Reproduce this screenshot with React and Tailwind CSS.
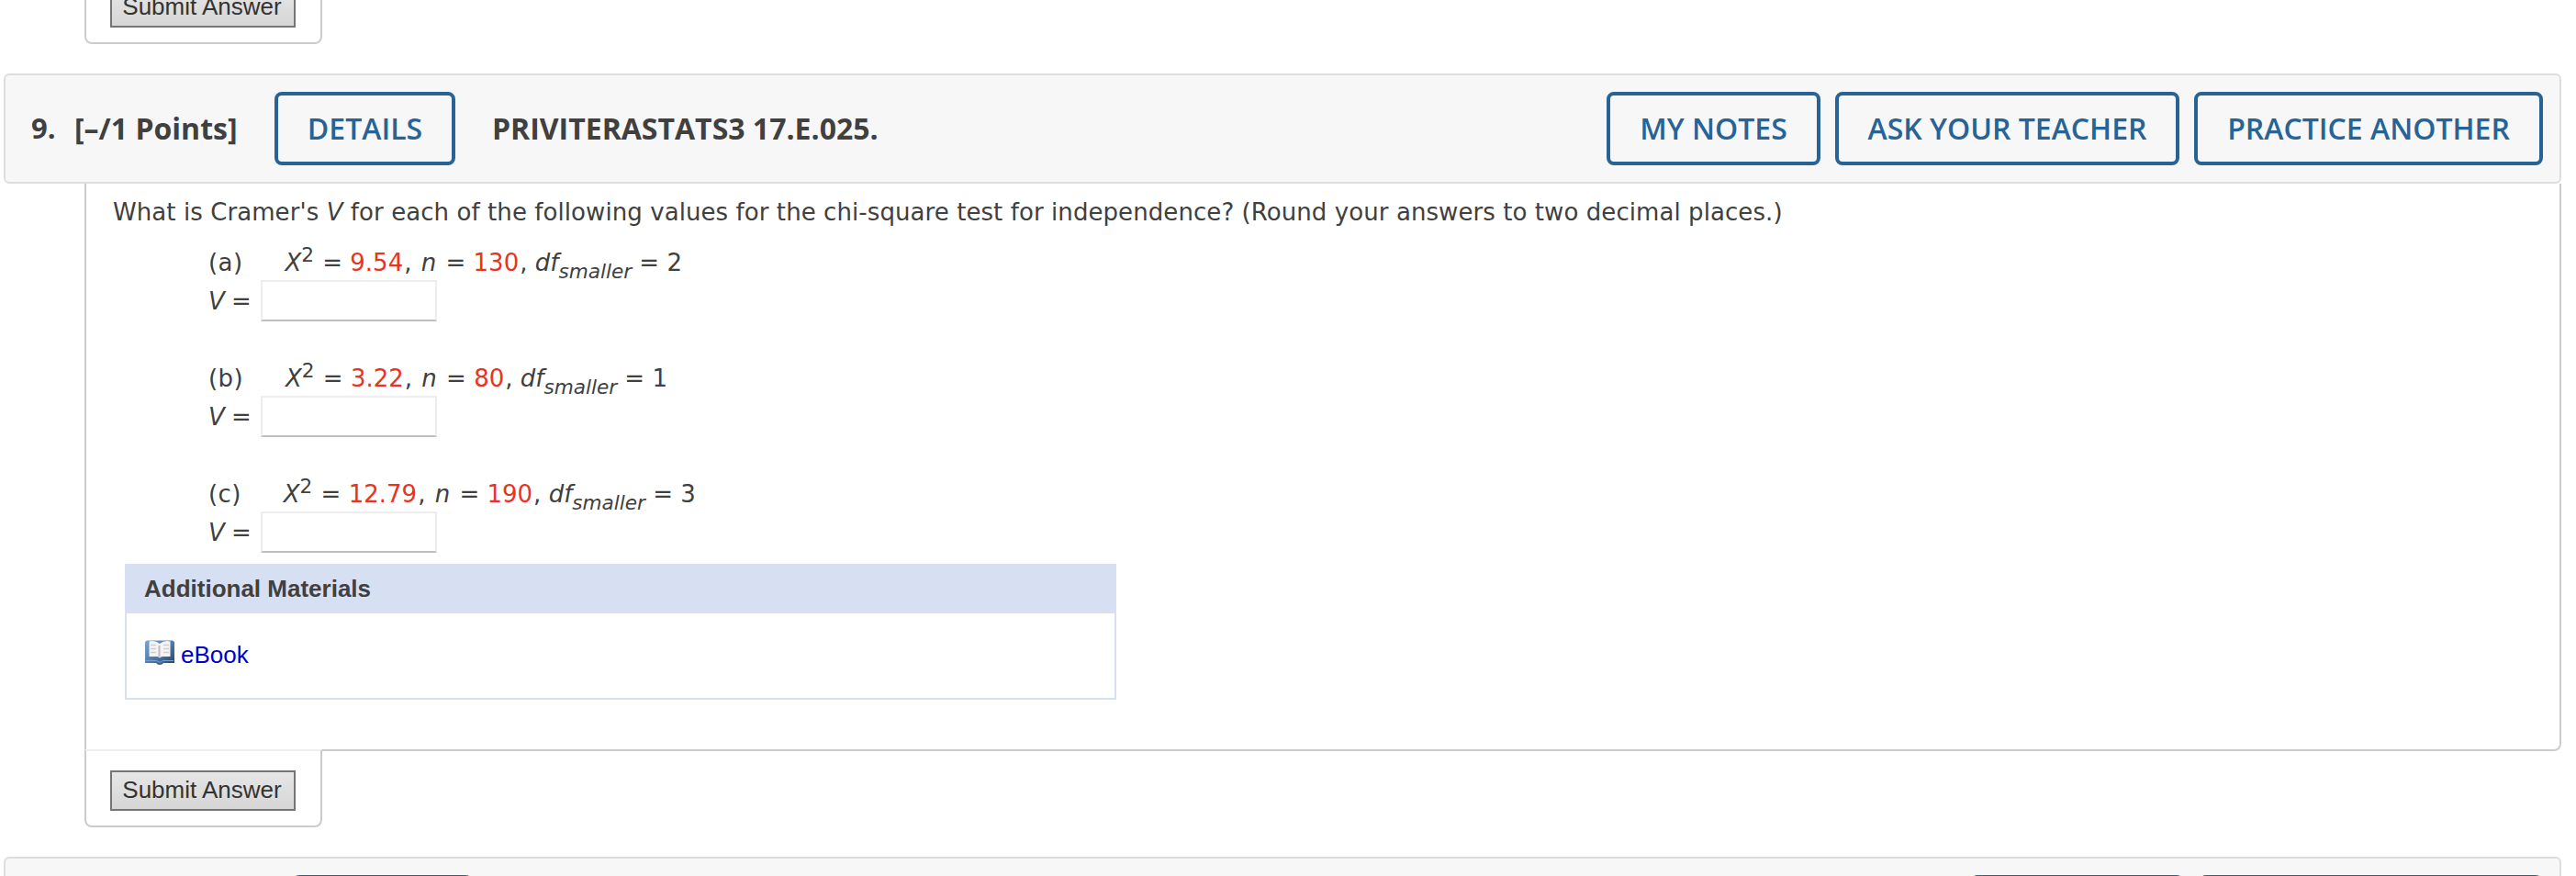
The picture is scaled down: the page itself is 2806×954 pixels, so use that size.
import React from 'react';

const parts = [
  { label: '(a)', chi: '9.54', n: '130', df: '2' },
  { label: '(b)', chi: '3.22', n: '80', df: '1' },
  { label: '(c)', chi: '12.79', n: '190', df: '3' },
];

const SubmitButton = () => (
  <button className="h-[44px] w-[202px] shrink-0 border-2 border-[#757575] bg-linear-to-b from-[#e6e6e6] to-[#d6d6d6] pr-[2px] pb-[2px] text-center text-[26px] leading-[38px] whitespace-nowrap text-[#333] font-['Liberation_Sans',Arial,sans-serif]">
    Submit Answer
  </button>
);

const HeaderButton = ({ className, children }) => (
  <button className={`h-[80px] shrink-0 rounded-[8px] border-4 border-[#286395] text-center font-semibold whitespace-nowrap text-[#286395] ${className}`}>
    {children}
  </button>
);

const BookIcon = () => (
  <svg className="-mt-[6px] h-[28px] w-[32px] shrink-0" viewBox="0 0 32 28">
    <defs>
      <linearGradient id="cover" x1="0" y1="0" x2="1" y2="1">
        <stop offset="0" stopColor="#7aa6d0" />
        <stop offset="0.5" stopColor="#4f7dab" />
        <stop offset="1" stopColor="#1d4373" />
      </linearGradient>
    </defs>
    <path d="M0 3 L2 1.500 H30 L32 3 V26 H20 Q19 28 16 28 Q13 28 12 26 H0 Z" fill="url(#cover)" />
    <path d="M1 23.500 H12 Q14 23.500 14.500 25 H17.500 Q18 23.500 20 23.500 H31" stroke="#7f9fc0" strokeWidth="1" fill="none" />
    <path d="M4.500 2.500 Q11 1 16 5 Q21 1 27.500 2.500 V19 H19 Q17 19 16 20.500 Q15 19 13 19 H4.500 Z" fill="#f4f4f4" />
    <path d="M14.500 7 H16.500 V19 H14.500 Z" fill="#bdbdbd" />
    <path d="M6 6.500 H12 M6 10.500 H12 M6 14.500 H12 M20 6.500 H26 M20 10.500 H26 M20 14.500 H26" stroke="#cfcfcf" strokeWidth="1.500" />
  </svg>
);

const Part = ({ label, chi, n, df }) => (
  <div className="mb-[42px] last:mb-0">
    <div className="h-[42px] whitespace-pre">
      <span className="mr-[46px] tracking-[0.4px]">{label}</span>
      <i>X</i>
      <sup className="relative top-[-10px] mr-[1px] align-baseline text-[21.6px] leading-[0]">2</sup> = <span className="text-[#ea3323]">{chi}</span><span className="ml-px">,</span> <i className="mr-[2px] ml-[2px]">n</i> = <span className="text-[#ea3323]">{n}</span><span className="ml-px">,</span> <i>df</i>
      <sub className="relative top-[8px] align-baseline text-[21.6px] leading-[0] italic">smaller</sub> = {df}
    </div>
    <div className="flex h-[42px] items-start">
      <span className="w-[57px] whitespace-pre"><i className="-mr-px">V</i> =</span>
      <input className="-mt-[2px] h-[45px] w-[192px] border-2 border-[#eee] border-b-[#bfbfbf] bg-white" />
    </div>
  </div>
);

const App = () => {
  return (
    <div className="flex h-[954px] w-[2806px] flex-col overflow-hidden bg-white text-[#404040]">
      <div className="ml-[92px] h-[48px] w-[259px] shrink-0 rounded-b-[8px] border-2 border-t-0 border-[#ccc] pl-[26px]">
        <div className="-mt-[14px]"><SubmitButton /></div>
      </div>

      <div className="mt-8 ml-1 flex h-[120px] w-[2786px] shrink-0 items-center rounded-[6px] border-2 border-[#ddd] bg-[#f7f7f7] pr-[18px] pl-[28px] text-[32px] leading-[44px] font-['Open_Sans',sans-serif]">
        <span className="w-[47px] pb-[3px] text-[31px] font-bold">9.</span>
        <span className="w-[218px] font-bold whitespace-nowrap">[–/1 Points]</span>
        <HeaderButton className="w-[197px]">DETAILS</HeaderButton>
        <span className="ml-[40px] font-bold">PRIVITERASTATS3 17.E.025.</span>
        <div className="ml-auto flex gap-4">
          <HeaderButton className="w-[233px]">MY NOTES</HeaderButton>
          <HeaderButton className="w-[375px]">ASK YOUR TEACHER</HeaderButton>
          <HeaderButton className="w-[380px]">PRACTICE ANOTHER</HeaderButton>
        </div>
      </div>

      <div className="ml-[92px] h-[618px] w-[2698px] shrink-0 rounded-br-[8px] border-2 border-t-0 border-[#ccc] pt-[10px] pl-[28px] text-[26px] leading-[42px] font-['DejaVu_Sans',Verdana,sans-serif]">
        <p className="ml-px tracking-[0.075px] whitespace-nowrap">
          What is Cramer's <i>V</i> for each of the following values for the chi-square test for independence? (Round your answers to two decimal places.)
        </p>
        <div className="mt-[13px] ml-[105px]">
          {parts.map((part) => (
            <Part key={part.label} {...part} />
          ))}
        </div>
        <div className="mt-[13px] ml-[14px] h-[148px] w-[1080px] border-2 border-t-0 border-[#d7dff3] font-['Liberation_Sans',Arial,sans-serif]">
          <div className="h-[54px] bg-[#d7dff3] pl-[19px] leading-[54px] font-bold">Additional Materials</div>
          <div className="flex h-[90px] items-center pl-[20px]">
            <BookIcon />
            <a className="ml-[7px] text-[#0000c8]">eBook</a>
          </div>
        </div>
      </div>

      <div className="relative -mt-[2px] ml-[92px] h-[85px] w-[259px] shrink-0 rounded-b-[8px] border-2 border-t-[#f0f0f0] border-[#ccc] bg-white pt-[21px] pl-[26px]">
        <SubmitButton />
      </div>

      <div className="mt-[32px] ml-1 flex h-[120px] w-[2786px] shrink-0 items-center rounded-[6px] border-2 border-[#ddd] bg-[#f7f7f7] pr-[18px] pl-[312px]">
        <HeaderButton className="w-[197px]" />
        <div className="ml-auto flex gap-4">
          <HeaderButton className="w-[233px]" />
          <HeaderButton className="w-[375px]" />
        </div>
      </div>
    </div>
  );
};

export default App;
